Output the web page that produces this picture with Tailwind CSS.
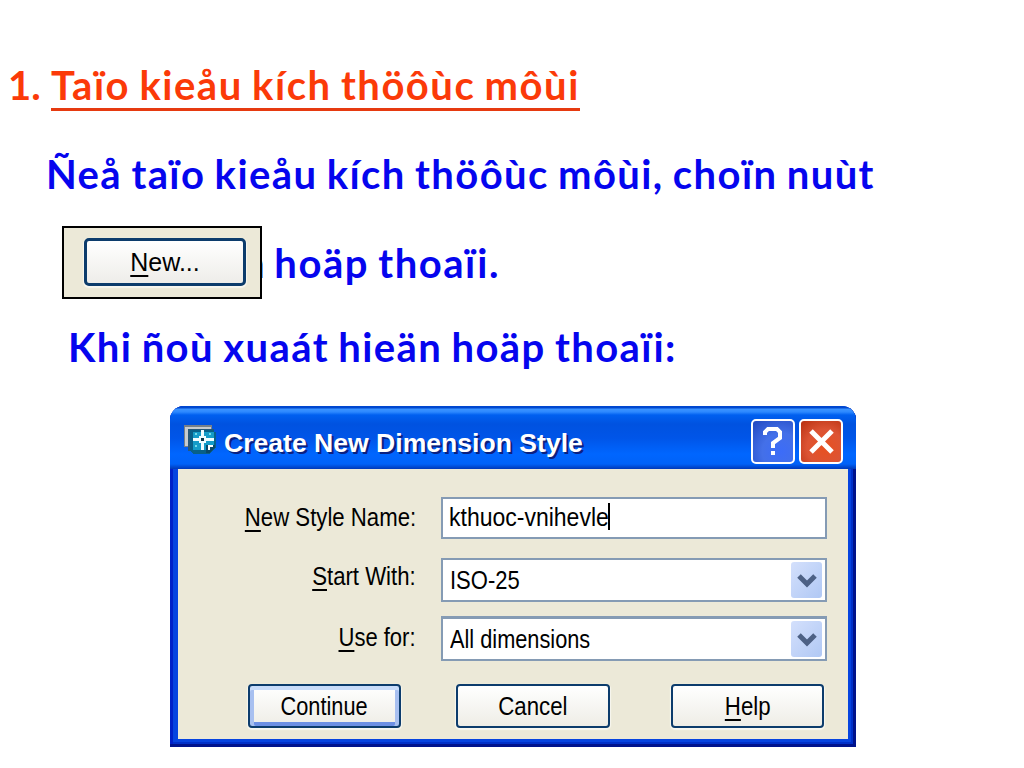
<!DOCTYPE html>
<html lang="vi">
 <head>
  <meta charset="utf-8"/>
  <title>Create New Dimension Style</title>
  <script src="https://cdn.jsdelivr.net/npm/@tailwindcss/browser@4"></script>
 </head>
 <body class="bg-white w-[1024px] h-[768px] overflow-hidden font-['Liberation_Sans',sans-serif] text-black">
  <!-- Slide text -->
  <section class="h-[406px] pt-[61px] font-['Lato',sans-serif] font-bold text-[40px] leading-[48px] whitespace-nowrap text-[#0505ee] tracking-[1.5px] [word-spacing:-1.8px]">
   <h1 class="pl-[8px] flex text-[#fb3a08]">
    <span class="w-[43px] tracking-normal">1.</span>
    <span class="w-[529px] h-[50px] border-b-3 border-[#e63a10]">Taïo kieåu kích thöôùc môùi</span>
   </h1>
   <p class="mt-[39px] pl-[46px] tracking-[1.4px]">Ñeå taïo kieåu kích thöôùc môùi, choïn nuùt</p>
   <div class="relative mt-[41px] pl-[166px]">
    <p class="w-[334px] text-right"><span class="mr-[-1px]">n</span> hoäp thoaïi.</p>
    <div class="absolute left-[62px] top-[-13px] w-[200px] h-[73px] border-2 border-black bg-[#ece9d8] pl-[20px] pt-[10px]">
     <button class="block w-[162px] h-[48px] rounded-[5px] border-3 border-[#0c3c6c] bg-linear-to-b from-white to-[#eeede9] shadow-[0_1px_1px_1px_#f8f7f0] font-['Liberation_Sans',sans-serif] font-normal tracking-normal text-[25px] leading-[42px] text-black"><span class="underline underline-offset-4 decoration-2">N</span>ew...</button>
    </div>
   </div>
   <p class="mt-[36px] pl-[68px] tracking-[1.4px]">Khi ñoù xuaát hieän hoäp thoaïi:</p>
  </section>

  <!-- Dialog -->
  <main class="ml-[170px] w-[686px] h-[341px] rounded-t-[14px] overflow-hidden bg-[#0644e0] shadow-[inset_-3px_-3px_0_#00138c,inset_3px_0_0_#0020c8,inset_-5px_-5px_0_#0030c8]">
   <header class="h-[63px] pl-[14px] pr-[12px] pt-[1px] flex items-center bg-[linear-gradient(to_bottom,#0048d0_0,#0048d0_2px,#3c94ff_3px,#2c88ff_6px,#0060f0_9px,#0052e0_18px,#0055e8_32px,#0066ff_48px,#0062f8_58px,#0038b8_63px)]">
    <svg class="w-[32px] h-[30px] mt-[4px]" viewBox="0 0 32 30" shape-rendering="crispEdges">
     <path d="M0 0h28v4H4v18H0z" fill="#777f88"/>
     <path d="M1 2h26v2H4v17H1z" fill="#c8ccd0"/>
     <path d="M4 4h26v3H7v19H4z" fill="#285878"/>
     <path d="M6 5h24v2h2v15l-6 7H9l-3-3V7z" fill="#086088"/>
     <path d="M9 7h21v13l-5 5H9z" fill="#149cc8"/>
     <path d="M17 5h3v20h-3zM9 13h21v3H9zM15 11h7v7h-7z" fill="#f0fdff"/>
     <path d="M17 13h3v3h-3z" fill="#08374c"/>
     <path d="M22 20h9v2l-6 6h-3z" fill="#0a4868"/>
     <path d="M24 20h5v2h-3v3h-2z" fill="#fff"/>
     <path d="M11 8h2v2h-2zM25 8h2v2h-2zM11 20h2v2h-2z" fill="#70dcea"/>
    </svg>
    <h2 class="ml-[8px] w-[527px] pt-[9px] text-[26px] leading-[30px] font-bold text-white whitespace-nowrap [text-shadow:2px_2px_0_#0a2080]"><span class="inline-block origin-left scale-x-[1.022]">Create New Dimension Style</span></h2>
    <div class="flex gap-[4px] pt-[6px]">
     <button class="w-[44px] h-[45px] rounded-[5px] border-2 border-white bg-[radial-gradient(circle_at_70%_75%,#3c6cf8,#4470e8_45%,#2048c0)]">
      <svg class="w-full h-full" viewBox="0 0 40 41" fill="none" stroke="#fff" stroke-width="4"><path d="M12 14V11l3-3h9l3 3v6l-7 5v5M18 32h4"/></svg>
     </button>
     <button class="w-[44px] h-[45px] rounded-[5px] border-2 border-white bg-[radial-gradient(circle_at_60%_65%,#e85020,#dc5434_50%,#b83010)]">
      <svg class="w-full h-full" viewBox="0 0 40 41" fill="none" stroke="#fff" stroke-width="5"><path d="M10 10l21 21M31 10L10 31"/></svg>
     </button>
    </div>
   </header>

   <form class="mx-[8px] h-[270px] bg-[#ece9d8] pt-[28px] text-[25px] leading-[28px]">
    <div class="flex h-[42px]">
     <label class="w-[238px] pt-[6px] text-right whitespace-nowrap"><span class="inline-block origin-right scale-x-[.887]"><span class="underline underline-offset-4 decoration-2">N</span>ew Style Name:</span></label>
     <div class="ml-[25px] w-[386px] border-[2.5px] border-[#859bb4] bg-white pl-[6px] pt-[4px]"><span class="inline-block origin-left scale-x-[.92]">kthuoc-vnihevle</span><span class="inline-block ml-[-15px] w-[2px] h-[27px] bg-black align-top"></span></div>
    </div>
    <div class="flex h-[44px] mt-[19px]">
     <label class="w-[238px] pt-[4px] text-right whitespace-nowrap"><span class="inline-block origin-right scale-x-[.887]"><span class="underline underline-offset-4 decoration-2">S</span>tart With:</span></label>
     <div class="ml-[25px] w-[386px] border-2 border-[#859bb4] bg-white pl-[7px] pr-[3px] flex items-center justify-between">
      <span class="inline-block origin-left scale-x-[.88]">ISO-25</span>
      <span class="w-[31px] h-[36px] rounded-[3px] bg-linear-to-br from-[#d4e0fc] to-[#b0c8f4]"><svg viewBox="0 0 31 36" fill="none" stroke="#4d6185" stroke-width="5"><path d="M8 14l8 8 8-8"/></svg></span>
     </div>
    </div>
    <div class="flex h-[45px] mt-[14px]">
     <label class="w-[238px] pt-[7px] text-right whitespace-nowrap"><span class="inline-block origin-right scale-x-[.88]"><span class="underline underline-offset-4 decoration-2">U</span>se for:</span></label>
     <div class="ml-[25px] w-[386px] border-2 border-t-3 border-[#859bb4] bg-white pl-[7px] pr-[3px] flex items-center justify-between">
      <span class="inline-block origin-left scale-x-[.87]">All dimensions</span>
      <span class="w-[31px] h-[36px] rounded-[3px] bg-linear-to-br from-[#d4e0fc] to-[#b0c8f4]"><svg viewBox="0 0 31 36" fill="none" stroke="#4d6185" stroke-width="5"><path d="M8 14l8 8 8-8"/></svg></span>
     </div>
    </div>
    <div class="flex mt-[23px] pl-[70px]">
     <button type="button" class="w-[153px] h-[44px] rounded-[4px] border-2 border-[#0c3c6c] bg-linear-to-b from-white to-[#eeede6] shadow-[inset_0_4px_0_#c8dcfa,inset_4px_0_0_#a8c0f0,inset_-4px_0_0_#a8c0f0,inset_0_-4px_0_#6d90e4,0_1px_1px_1px_#f8f7f0]"><span class="inline-block scale-x-[.87]">Continue</span></button>
     <button type="button" class="ml-[55px] w-[154px] h-[44px] rounded-[4px] border-2 border-[#0c3c6c] bg-linear-to-b from-white to-[#eeede6] shadow-[0_1px_1px_1px_#f8f7f0]"><span class="inline-block scale-x-[.89]">Cancel</span></button>
     <button type="button" class="ml-[61px] w-[153px] h-[44px] rounded-[4px] border-2 border-[#0c3c6c] bg-linear-to-b from-white to-[#eeede6] shadow-[0_1px_1px_1px_#f8f7f0]"><span class="inline-block scale-x-[.89]"><span class="underline underline-offset-4 decoration-2">H</span>elp</span></button>
    </div>
   </form>
  </main>
 </body>
</html>
